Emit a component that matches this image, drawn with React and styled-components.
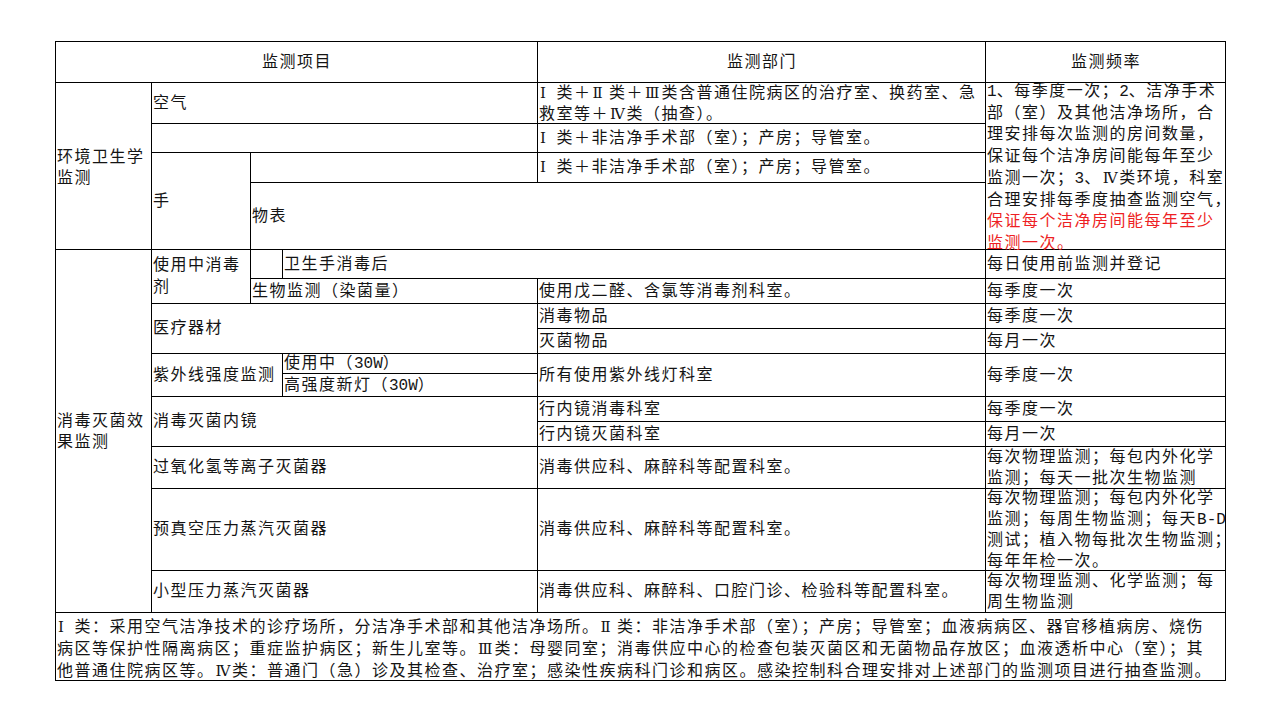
import React from "react";
import styled, { createGlobalStyle } from "styled-components";

const Global = createGlobalStyle`
  html, body { margin: 0; padding: 0; background: #ffffff; }
  body { font-family: "Noto Sans CJK SC", sans-serif; }
`;

const Page = styled.div`
  padding: 41px 0 0 55px;
`;

const Table = styled.table`
  border-collapse: collapse;
  table-layout: fixed;
  width: 1170px;
  font-family: "Liberation Serif", "Noto Sans CJK SC", sans-serif;
  font-size: 16px;
  letter-spacing: 1.5px;
  line-height: 18px;
  color: #141414;
`;

const Col = styled.col`
  width: ${(p) => p.$w}px;
`;

const Row = styled.tr`
  height: ${(p) => p.$h}px;
`;

const Cell = styled.td`
  border: 1px solid #000;
  padding: 0 0 0 1px;
  vertical-align: middle;
  text-align: ${(p) => (p.$center ? "center" : "left")};
  white-space: nowrap;
  overflow: visible;
`;

const Lines = styled.div`
  line-height: ${(p) => p.$lh || 20}px;
  margin: ${(p) => (p.$shift || 0) - (p.$bleed || 0)}px 0
    ${(p) => -(p.$shift || 0) - (p.$bleed || 0)}px;
`;

const Line = styled.span`
  display: block;
  color: ${(p) => (p.$red ? "#ee1f24" : "inherit")};
`;

const Roman = styled.span`
  display: inline-block;
  width: 16px;
  margin-right: 1.5px;
  padding-left: 1px;
  box-sizing: border-box;
  text-align: left;
  font-family: "DejaVu Serif", "Liberation Serif", serif;
  font-size: 15px;
  letter-spacing: 0;
  line-height: 0;
  vertical-align: baseline;
`;

const Latin = styled.span`
  font-family: "Liberation Mono", monospace;
  font-size: 16px;
  letter-spacing: 0;
  line-height: 0;
`;

const rich = (text) => {
  const parts = text.split(/([\u2160-\u2163]|[A-Za-z0-9\-]+)/);
  return parts.map((p, i) => {
    if (!p) return null;
    if (/^[\u2160-\u2163]$/.test(p)) return <Roman key={i}>{p}</Roman>;
    if (/^[A-Za-z0-9\-]+$/.test(p)) return <Latin key={i}>{p}</Latin>;
    return <React.Fragment key={i}>{p}</React.Fragment>;
  });
};

const Multi = ({ lines, lh, bleed, shift, red = [] }) => (
  <Lines $lh={lh} $bleed={bleed} $shift={shift}>
    {lines.map((l, i) => (
      <Line key={i} $red={red.includes(i)}>
        {rich(l)}
      </Line>
    ))}
  </Lines>
);

const envFreq = [
  "1、每季度一次；2、洁净手术",
  "部（室）及其他洁净场所，合",
  "理安排每次监测的房间数量，",
  "保证每个洁净房间能每年至少",
  "监测一次；3、Ⅳ类环境，科室",
  "合理安排每季度抽查监测空气，",
  "保证每个洁净房间能每年至少",
  "监测一次。",
];

const notes = [
  "Ⅰ类：采用空气洁净技术的诊疗场所，分洁净手术部和其他洁净场所。Ⅱ类：非洁净手术部（室）；产房；导管室；血液病病区、器官移植病房、烧伤",
  "病区等保护性隔离病区；重症监护病区；新生儿室等。Ⅲ类：母婴同室；消毒供应中心的检查包装灭菌区和无菌物品存放区；血液透析中心（室）；其",
  "他普通住院病区等。Ⅳ类：普通门（急）诊及其检查、治疗室；感染性疾病科门诊和病区。感染控制科合理安排对上述部门的监测项目进行抽查监测。",
];

export default function App() {
  return (
    <Page>
      <Global />
      <Table>
        <colgroup>
          <Col $w={96} />
          <Col $w={99} />
          <Col $w={32} />
          <Col $w={255} />
          <Col $w={448} />
          <Col $w={240} />
        </colgroup>
        <tbody>
          <Row $h={41}>
            <Cell colSpan={4} $center>监测项目</Cell>
            <Cell $center>监测部门</Cell>
            <Cell $center>监测频率</Cell>
          </Row>

          <Row $h={41}>
            <Cell rowSpan={4}>
              <Multi lines={["环境卫生学", "监测"]} lh={21} shift={1} />
            </Cell>
            <Cell colSpan={3}>空气</Cell>
            <Cell>
              <Multi
                lines={[
                  "Ⅰ类＋Ⅱ类＋Ⅲ类含普通住院病区的治疗室、换药室、急",
                  "救室等＋Ⅳ类（抽查）。",
                ]}
                lh={21}
                bleed={1}
              />
            </Cell>
            <Cell rowSpan={4}>
              <Multi lines={envFreq} lh={21.7} bleed={4} shift={1} red={[6, 7]} />
            </Cell>
          </Row>
          <Row $h={29}>
            <Cell colSpan={3} />
            <Cell>{rich("Ⅰ类＋非洁净手术部（室）；产房；导管室。")}</Cell>
          </Row>
          <Row $h={29}>
            <Cell rowSpan={2}>手</Cell>
            <Cell colSpan={2} />
            <Cell>{rich("Ⅰ类＋非洁净手术部（室）；产房；导管室。")}</Cell>
          </Row>
          <Row $h={67}>
            <Cell colSpan={3}>物表</Cell>
          </Row>

          <Row $h={29}>
            <Cell rowSpan={11}>
              <Multi lines={["消毒灭菌效", "果监测"]} lh={21} />
            </Cell>
            <Cell rowSpan={2}>
              <Multi lines={["使用中消毒", "剂"]} lh={22} />
            </Cell>
            <Cell />
            <Cell colSpan={2}>卫生手消毒后</Cell>
            <Cell>每日使用前监测并登记</Cell>
          </Row>
          <Row $h={25}>
            <Cell colSpan={2}>生物监测（染菌量）</Cell>
            <Cell>使用戊二醛、含氯等消毒剂科室。</Cell>
            <Cell>每季度一次</Cell>
          </Row>

          <Row $h={25}>
            <Cell colSpan={3} rowSpan={2}>医疗器材</Cell>
            <Cell>消毒物品</Cell>
            <Cell>每季度一次</Cell>
          </Row>
          <Row $h={25}>
            <Cell>灭菌物品</Cell>
            <Cell>每月一次</Cell>
          </Row>

          <Row $h={20}>
            <Cell colSpan={2} rowSpan={2}>紫外线强度监测</Cell>
            <Cell>{rich("使用中（30W）")}</Cell>
            <Cell rowSpan={2}>所有使用紫外线灯科室</Cell>
            <Cell rowSpan={2}>每季度一次</Cell>
          </Row>
          <Row $h={23}>
            <Cell>{rich("高强度新灯（30W）")}</Cell>
          </Row>

          <Row $h={25}>
            <Cell colSpan={3} rowSpan={2}>消毒灭菌内镜</Cell>
            <Cell>行内镜消毒科室</Cell>
            <Cell>每季度一次</Cell>
          </Row>
          <Row $h={25}>
            <Cell>行内镜灭菌科室</Cell>
            <Cell>每月一次</Cell>
          </Row>

          <Row $h={42}>
            <Cell colSpan={3}>过氧化氢等离子灭菌器</Cell>
            <Cell>消毒供应科、麻醉科等配置科室。</Cell>
            <Cell>
              <Multi
                lines={["每次物理监测；每包内外化学", "监测；每天一批次生物监测"]}
                lh={21}
                bleed={1}
              />
            </Cell>
          </Row>
          <Row $h={82}>
            <Cell colSpan={3}>预真空压力蒸汽灭菌器</Cell>
            <Cell>消毒供应科、麻醉科等配置科室。</Cell>
            <Cell>
              <Multi
                lines={[
                  "每次物理监测；每包内外化学",
                  "监测；每周生物监测；每天B-D",
                  "测试；植入物每批次生物监测；",
                  "每年年检一次。",
                ]}
                lh={21}
                bleed={2}
              />
            </Cell>
          </Row>
          <Row $h={42}>
            <Cell colSpan={3}>小型压力蒸汽灭菌器</Cell>
            <Cell>消毒供应科、麻醉科、口腔门诊、检验科等配置科室。</Cell>
            <Cell>
              <Multi
                lines={["每次物理监测、化学监测；每", "周生物监测"]}
                lh={21}
                bleed={1}
              />
            </Cell>
          </Row>

          <Row $h={68}>
            <Cell colSpan={6}>
              <Multi lines={notes} lh={22} shift={3} />
            </Cell>
          </Row>
        </tbody>
      </Table>
    </Page>
  );
}
